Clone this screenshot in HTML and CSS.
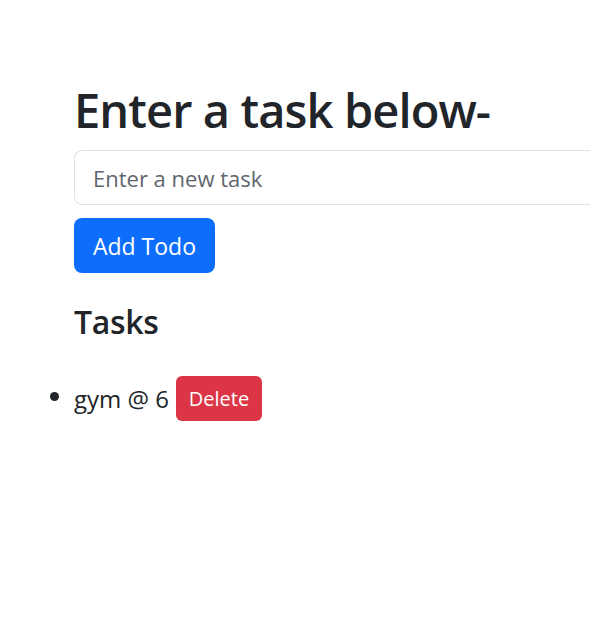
FILE: index.html
```html
<!DOCTYPE html>
<html lang="en">
<head>
<meta charset="utf-8">
<title>Todo</title>
<link rel="stylesheet" href="styles.css">
</head>
<body>
<div class="container">
  <h1 class="title">Enter a task below-</h1>
  <input class="task-input" type="text" placeholder="Enter a new task">
  <button class="btn btn-primary">Add Todo</button>
  <h2 class="subtitle">Tasks</h2>
  <ul class="task-list">
    <li class="task-item"><span class="task-text">gym @ 6</span><button class="btn btn-danger">Delete</button></li>
  </ul>
</div>
</body>
</html>
```
FILE: styles.css
```css
html, body {
  margin: 0;
  padding: 0;
  overflow: hidden;
  background: #fff;
}
body {
  font-family: "Open Sans", "Noto Sans", sans-serif;
  color: #212529;
}
.container {
  padding: 82px 0 0 74px;
  display: flex;
  flex-direction: column;
  align-items: flex-start;
}
.title {
  margin: 0 0 12px 0;
  font-size: 47px;
  font-weight: 600;
  line-height: 1.2;
  letter-spacing: -0.9px;
}
.task-input {
  box-sizing: border-box;
  width: calc(100vw - 74px);
  height: 55px;
  border: 1px solid #dee2e6;
  border-right: none;
  border-radius: 8px 0 0 8px;
  padding: 0 18px;
  font-family: inherit;
  font-size: 22px;
  color: #212529;
  outline: none;
}
.task-input::placeholder {
  color: #5f666d;
}
.btn {
  border: none;
  color: #fff;
  font-family: inherit;
  cursor: pointer;
}
.btn-primary {
  margin-top: 13px;
  width: 141px;
  height: 55px;
  background: #0d6efd;
  border-radius: 8px;
  font-size: 23px;
  padding: 0;
}
.subtitle {
  margin: 30px 0 0 0;
  font-size: 32px;
  font-weight: 600;
  line-height: 1.2;
  letter-spacing: -0.3px;
}
.task-list {
  margin: 34px 0 0 0;
  padding-left: 0;
  list-style: disc;
}
.task-item {
  font-size: 24px;
  display: list-item;
}
.task-text {
  vertical-align: middle;
}
.btn-danger {
  margin-left: 7px;
  width: 86px;
  height: 45px;
  background: #dc3545;
  border-radius: 6px;
  font-size: 20px;
  padding: 0;
  vertical-align: middle;
}
```
